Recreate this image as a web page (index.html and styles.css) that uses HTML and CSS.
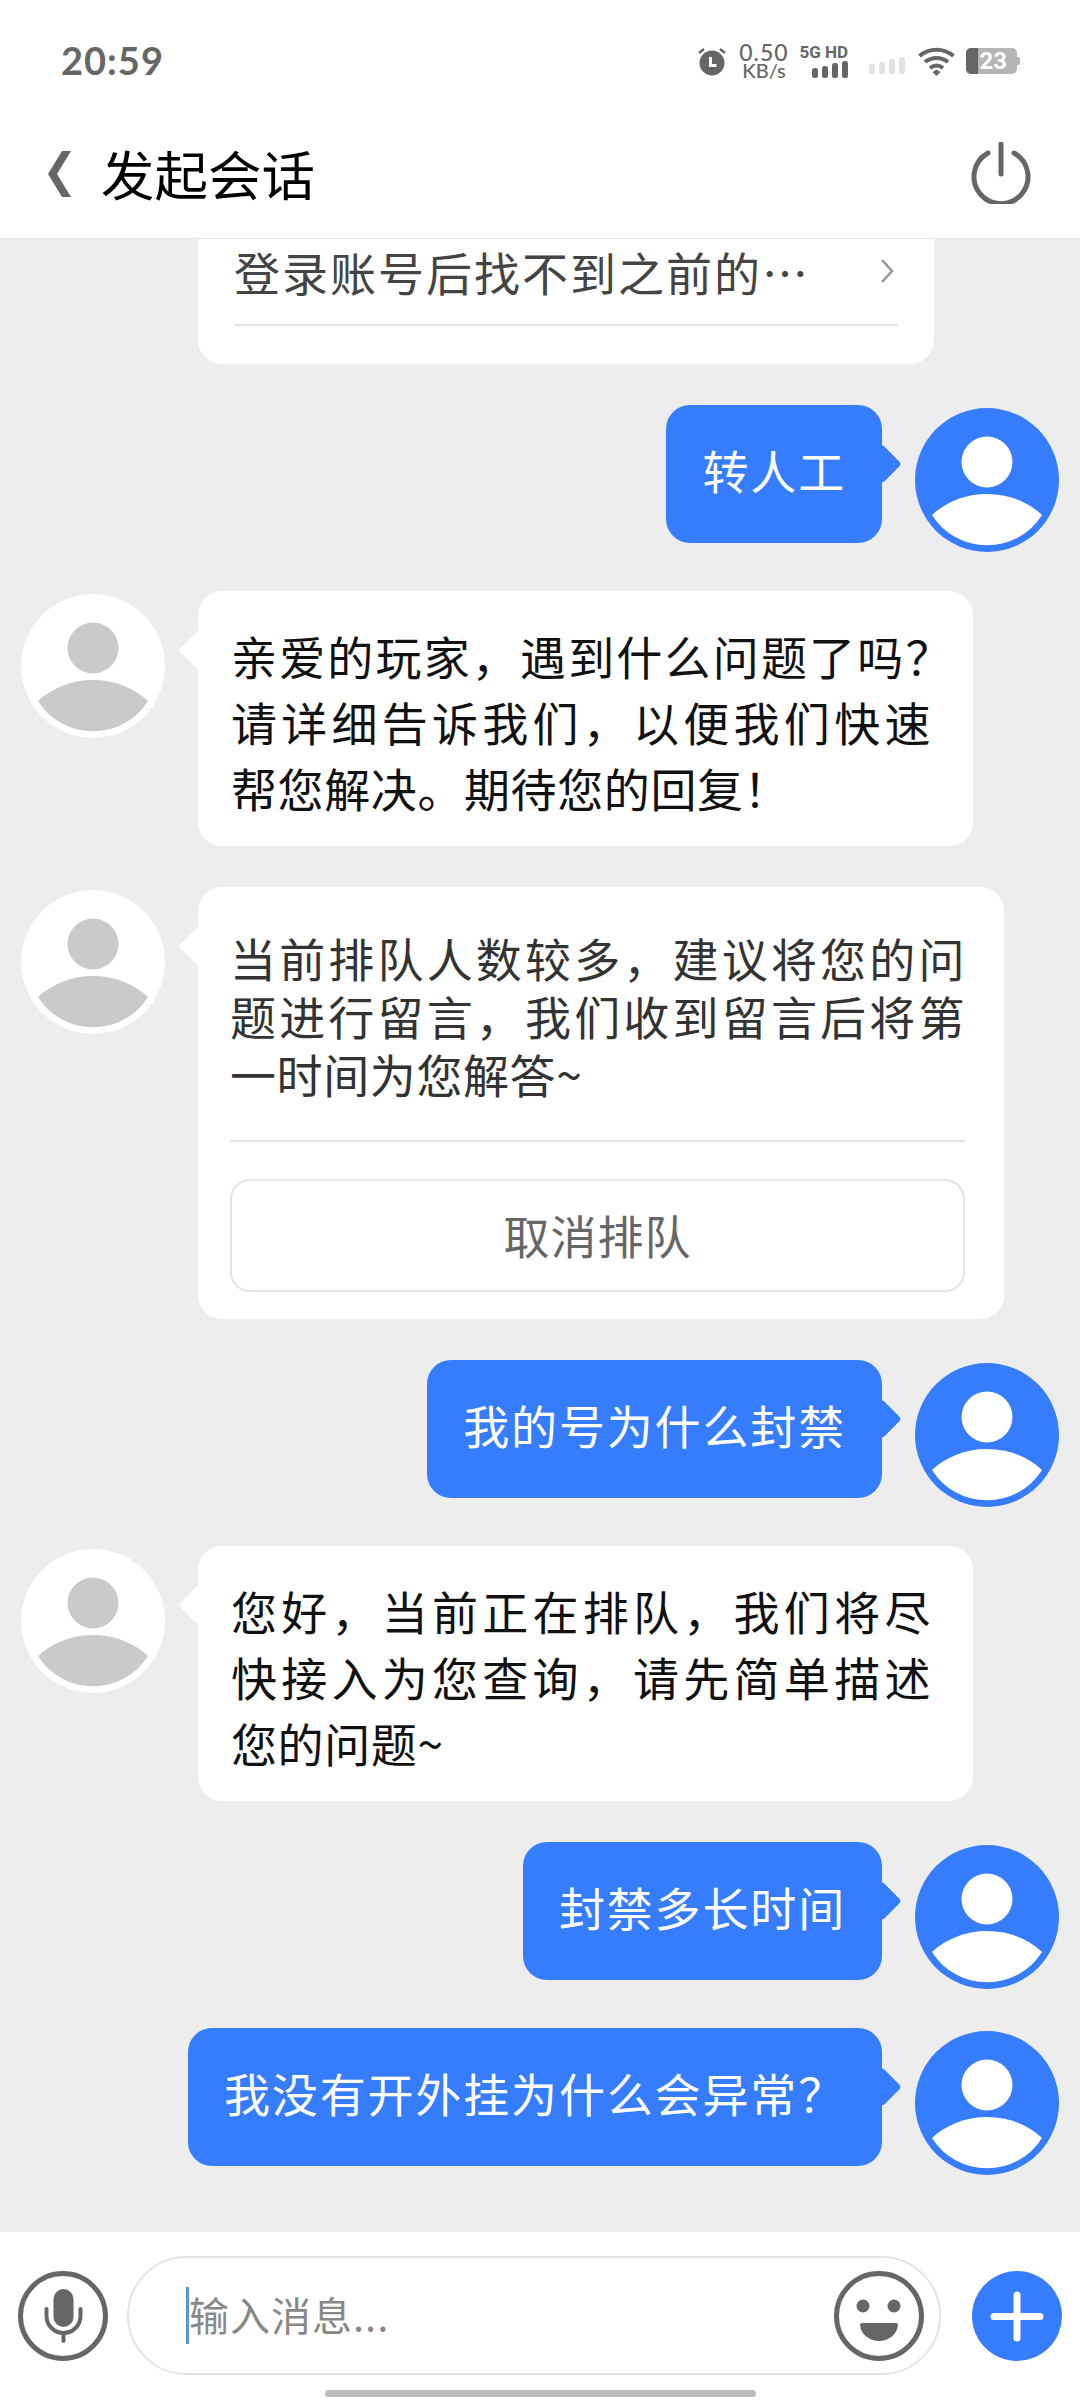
FILE: index.html
```html
<!DOCTYPE html>
<html lang="zh-CN">
<head>
<meta charset="utf-8">
<title>发起会话</title>
<link rel="stylesheet" href="styles.css">
</head>
<body>
<svg class="defs" width="0" height="0" aria-hidden="true">
  <symbol id="avatar" viewBox="0 0 144 144">
    <circle class="av-bg" cx="72" cy="72" r="72"/>
    <circle class="av-fg" cx="72" cy="54" r="25.5"/>
    <path class="av-fg" d="M17 107 C31 94 50 86 72 86 C94 86 113 94 127 107 A65 65 0 0 1 17 107 Z"/>
  </symbol>
</svg>

<header class="status">
  <span class="time">20:59</span>
  <div class="status-right">
    <svg class="ic-alarm" viewBox="0 0 28 29"><circle cx="14" cy="16" r="12.5" fill="#666"/><path d="M1 6 L6 2 M27 6 L22 2" stroke="#666" stroke-width="2.4" fill="none"/><path d="M12.5 10 V18.5 H18.5" stroke="#fff" stroke-width="3" fill="none"/></svg>
    <div class="speed"><span class="speed-n">0.50</span><span class="speed-u">KB/s</span></div>
    <div class="sig">
      <span class="sig-t">5G HD</span>
      <svg class="ic-bars" viewBox="0 0 36 17"><g fill="#666"><rect x="0" y="7" width="6" height="10" rx="2.5"/><rect x="10" y="5" width="6" height="12" rx="2.5"/><rect x="20" y="2" width="6" height="15" rx="2.5"/><rect x="30" y="0" width="6" height="17" rx="2.5"/></g></svg>
    </div>
    <svg class="ic-bars ic-bars-faint" viewBox="0 0 36 17"><g fill="#e2e2e2"><rect x="0" y="7" width="6" height="10" rx="2.5"/><rect x="10" y="5" width="6" height="12" rx="2.5"/><rect x="20" y="2" width="6" height="15" rx="2.5"/><rect x="30" y="0" width="6" height="17" rx="2.5"/></g></svg>
    <svg class="ic-wifi" viewBox="0 0 37 29"><g fill="none" stroke="#666" stroke-width="4"><path d="M1.5 9 C11 0.500 26 0.500 35.500 9"/><path d="M7 15 C13.500 9.500 23.500 9.500 30 15"/><path d="M12 21 C16 18 21 18 25 21"/></g><path d="M14.500 25 L18.500 22.500 L22.500 25 L18.500 29 Z" fill="#666"/></svg>
    <div class="batt"><span class="batt-fill"></span><span class="batt-n">23</span><span class="batt-cap"></span></div>
  </div>
</header>

<nav class="nav">
  <svg class="ic-back" viewBox="0 0 23 46"><path d="M14 0 H23 L9 23 L23 46 H14 L0 23 Z" fill="#666"/></svg>
  <h1 class="title">发起会话</h1>
  <svg class="ic-power" viewBox="0 0 60 62"><g fill="none" stroke="#666" stroke-width="5" stroke-linecap="round"><path d="M17 11 A27 27 0 1 0 43 11"/><path d="M30 2 V32"/></g></svg>
</nav>

<main class="chat">
  <section class="top-card">
    <div class="top-row"><span class="top-text">登录账号后找不到之前的…</span><svg class="ic-chev" viewBox="0 0 14 26"><path d="M2 2 L12 13 L2 24" fill="none" stroke="#999" stroke-width="2.600"/></svg></div>
    <div class="rule"></div>
  </section>

  <div class="row row-me">
    <div class="bubble bubble-me">转人工</div>
    <svg class="avatar avatar-me"><use href="#avatar"/></svg>
  </div>

  <div class="row row-other">
    <svg class="avatar avatar-other"><use href="#avatar"/></svg>
    <div class="bubble bubble-other w-775">
      <div class="ln full wide">亲爱的玩家&#xFF0C;遇到什么问题了吗&#xFF1F;</div>
      <div class="ln full">请详细告诉我们&#xFF0C;以便我们快速</div>
      <div class="ln">帮您解决。期待您的回复&#xFF01;</div>
    </div>
  </div>

  <div class="row row-other">
    <svg class="avatar avatar-other"><use href="#avatar"/></svg>
    <div class="bubble bubble-other bubble-queue">
      <div class="queue-text">
        <div class="ln full">当前排队人数较多&#xFF0C;建议将您的问</div>
        <div class="ln full">题进行留言&#xFF0C;我们收到留言后将第</div>
        <div class="ln">一时间为您解答~</div>
      </div>
      <div class="rule queue-rule"></div>
      <div class="queue-btn">取消排队</div>
    </div>
  </div>

  <div class="row row-me">
    <div class="bubble bubble-me">我的号为什么封禁</div>
    <svg class="avatar avatar-me"><use href="#avatar"/></svg>
  </div>

  <div class="row row-other">
    <svg class="avatar avatar-other"><use href="#avatar"/></svg>
    <div class="bubble bubble-other w-775">
      <div class="ln full">您好&#xFF0C;当前正在排队&#xFF0C;我们将尽</div>
      <div class="ln full">快接入为您查询&#xFF0C;请先简单描述</div>
      <div class="ln">您的问题~</div>
    </div>
  </div>

  <div class="row row-me">
    <div class="bubble bubble-me">封禁多长时间</div>
    <svg class="avatar avatar-me"><use href="#avatar"/></svg>
  </div>

  <div class="row row-me">
    <div class="bubble bubble-me">我没有开外挂为什么会异常&#xFF1F;</div>
    <svg class="avatar avatar-me"><use href="#avatar"/></svg>
  </div>
</main>

<footer class="footer">
  <svg class="ic-round" viewBox="0 0 90 90"><circle cx="45" cy="45" r="42.500" fill="none" stroke="#666" stroke-width="5"/><rect x="35.500" y="18" width="20" height="38" rx="10" fill="#666"/><path d="M28.500 38 V45 A17 17 0 0 0 62.500 45 V38 M45.500 62 V70" fill="none" stroke="#666" stroke-width="4" stroke-linecap="round"/></svg>
  <div class="input">
    <span class="caret"></span>
    <span class="placeholder">输入消息...</span>
    <svg class="ic-round ic-smile" viewBox="0 0 90 90"><circle cx="45" cy="45" r="42.500" fill="none" stroke="#666" stroke-width="5"/><circle cx="29" cy="35" r="6.500" fill="#666"/><circle cx="60" cy="35" r="6.500" fill="#666"/><path d="M26 54 Q26 52 28 52 H62 Q64 52 64 54 C63 64 54 70 45 70 C36 70 27 64 26 54 Z" fill="#666"/></svg>
  </div>
  <svg class="ic-round ic-plus" viewBox="0 0 90 90"><circle cx="45" cy="45" r="45" fill="#367dfd"/><path d="M45 24 V67 M22 45.500 H68" stroke="#fff" stroke-width="7" stroke-linecap="round"/></svg>
  <span class="home-bar"></span>
</footer>
</body>
</html>
```
FILE: styles.css
```css
* { box-sizing: border-box; }
html, body { margin: 0; padding: 0; }
body {
  width: 1080px;
  height: 2400px;
  overflow: hidden;
  display: flex;
  flex-direction: column;
  background: #fff;
  font-family: "Noto Sans CJK SC", "Noto Sans", sans-serif;
}
.defs { position: absolute; }

/* status bar */
.status {
  height: 122px;
  flex: none;
  display: flex;
  align-items: center;
  padding: 0 60px 0 61px;
}
.time {
  font-family: "Lato", sans-serif;
  font-weight: 700;
  font-size: 38px;
  line-height: 44px;
  margin-top: -3px;
  color: #666;
  letter-spacing: 1px;
}
.status-right { margin-left: auto; display: flex; align-items: center; }
.ic-alarm { width: 28px; height: 29px; }
.speed {
  margin-left: 12px;
  width: 52px;
  display: flex;
  flex-direction: column;
  align-items: center;
  font-family: "Lato", sans-serif;
  color: #666;
  line-height: 1;
}
.speed-n { font-size: 23px; font-weight: 500; letter-spacing: 1px; line-height: 19px; }
.speed-u { font-size: 20px; font-weight: 500; line-height: 17px; }
.sig { margin-left: 8px; width: 50px; display: flex; flex-direction: column; align-items: flex-end; }
.sig-t {
  font-family: "Roboto", sans-serif;
  font-weight: 700;
  font-size: 17px;
  line-height: 17px;
  color: #666;
  white-space: nowrap;
}
.ic-bars { width: 36px; height: 17px; display: block; }
.ic-bars-faint { margin-left: 21px; align-self: flex-start; margin-top: 14px; }
.ic-wifi { width: 37px; height: 29px; margin-left: 13px; }
.batt {
  position: relative;
  margin-left: 11px;
  width: 51px;
  height: 26px;
  border-radius: 5px;
  background: #b5b5b5;
  margin-right: 3px;
  display: flex;
  align-items: center;
  justify-content: flex-end;
}
.batt-fill { position: absolute; left: 0; top: 0; bottom: 0; width: 12px; background: #666; border-radius: 5px 0 0 5px; }
.batt-n {
  font-family: "Roboto", sans-serif;
  font-weight: 700;
  font-size: 24px;
  line-height: 26px;
  color: #fff;
  margin-right: 10px;
}
.batt-cap { position: absolute; right: -3px; top: 9px; width: 3px; height: 8px; background: #b5b5b5; border-radius: 0 2px 2px 0; }

/* nav */
.nav {
  height: 117px;
  flex: none;
  display: flex;
  align-items: center;
  padding: 0 49px 12px 48px;
  border-bottom: 1px solid #e4e4e4;
}
.ic-back { width: 23px; height: 46px; }
.title {
  margin: -2px 0 0 30px;
  font-size: 53.5px;
  font-weight: 400;
  line-height: 60px;
  color: #000;
}
.ic-power { width: 60px; height: 62px; margin-left: auto; margin-top: -2px; }

/* chat */
.chat {
  flex: 1 1 0;
  min-height: 0;
  overflow: hidden;
  background: #ededed;
}
.top-card {
  width: 736px;
  margin-left: 198px;
  margin-bottom: 41px;
  height: 125px;
  padding: 0 36px;
  background: #fff;
  border-radius: 0 0 24px 24px;
}
.top-row { display: flex; align-items: center; justify-content: space-between; height: 66px; }
.top-text { font-size: 46px; letter-spacing: 2px; color: #444; line-height: 66px; margin-top: -2px; }
.ic-chev { width: 14px; height: 26px; margin-right: 4px; margin-top: -2px; }
.rule { height: 2px; background: #e4e4e4; }
.top-card .rule { margin-top: 19px; }

.row { display: flex; align-items: flex-start; gap: 33px; }
.row-me { justify-content: flex-end; padding-right: 21px; margin-bottom: 39px; }
.row-other { padding-left: 21px; margin-bottom: 41px; }
.avatar { width: 144px; height: 144px; margin-top: 3px; flex: none; display: block; }
.avatar-me { --bg: #367dfd; --fg: #fff; }
.avatar-other { --bg: #fff; --fg: #cacaca; }
.av-bg { fill: var(--bg); }
.av-fg { fill: var(--fg); }

.bubble { position: relative; font-size: 46px; line-height: 66px; border-radius: 24px; }
.bubble::after {
  content: "";
  position: absolute;
  top: 45px;
  width: 28px;
  height: 28px;
  border-radius: 4px;
  transform: rotate(45deg);
}
.bubble-me {
  padding: 31px 36px 41px;
  background: #367dfd;
  color: #fff;
  letter-spacing: 1.850px;
  white-space: nowrap;
}
.bubble-me::after { right: -14px; background: #367dfd; }
.bubble-other { padding: 31px 42px 26px 33px; background: #fff; color: #111; letter-spacing: 0.600px; }
.bubble-other::after { left: -14px; background: #fff; }
.w-775 { width: 775px; }
.ln { text-align: left; }
.ln.full { text-align: justify; text-align-last: justify; }
.ln.wide { margin-right: -21px; }

.bubble-queue { width: 806px; padding: 41px 39px 27px 32px; color: #333; line-height: 58px; }
.queue-rule { margin-top: 38px; }
.queue-btn {
  margin-top: 37px;
  height: 113px;
  display: flex;
  align-items: center;
  justify-content: center;
  padding-bottom: 4px;
  border: 2px solid #e4e4e4;
  border-radius: 20px;
  font-size: 46px;
  letter-spacing: 1px;
  color: #666;
}

/* footer */
.footer {
  position: relative;
  height: 168px;
  flex: none;
  display: flex;
  align-items: flex-start;
  padding: 24px 0 0 18px;
  background: #fff;
}
.ic-round { width: 90px; height: 90px; flex: none; margin-top: 15px; }
.input {
  width: 814px;
  height: 119px;
  margin-left: 19px;
  display: flex;
  align-items: center;
  padding: 0 15px 0 57px;
  border: 2px solid #e4e4e4;
  border-radius: 60px;
}
.caret { width: 3px; height: 57px; background: #5b95e0; flex: none; }
.placeholder { font-size: 40px; letter-spacing: 1px; color: #888; line-height: 57px; margin-top: -2px; }
.ic-smile { margin: 0 0 0 auto; }
.ic-plus { margin-left: 31px; }
.home-bar {
  position: absolute;
  left: 325px;
  top: 158px;
  width: 431px;
  height: 7px;
  border-radius: 4px;
  background: #bdbdbd;
}
```
